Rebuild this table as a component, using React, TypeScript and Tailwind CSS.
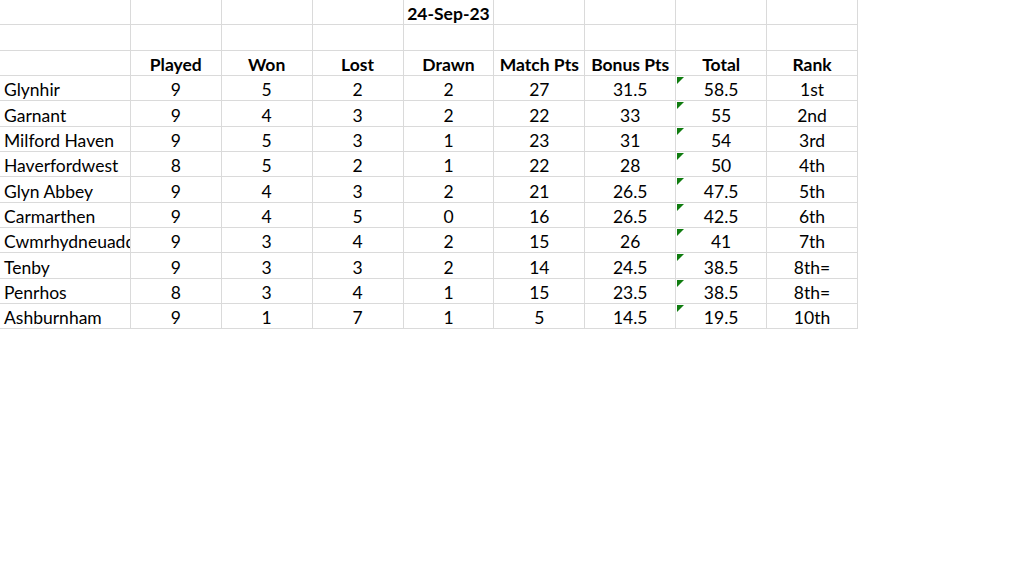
const ROW_H = [25, 26, 25, 25, 26, 25, 25, 26, 25, 25, 26, 25, 25];

const HEADERS = ["Played", "Won", "Lost", "Drawn", "Match Pts", "Bonus Pts", "Total", "Rank"];

const ROWS: [string, string, string, string, string, string, string, string, string][] = [
  ["Glynhir", "9", "5", "2", "2", "27", "31.5", "58.5", "1st"],
  ["Garnant", "9", "4", "3", "2", "22", "33", "55", "2nd"],
  ["Milford Haven", "9", "5", "3", "1", "23", "31", "54", "3rd"],
  ["Haverfordwest", "8", "5", "2", "1", "22", "28", "50", "4th"],
  ["Glyn Abbey", "9", "4", "3", "2", "21", "26.5", "47.5", "5th"],
  ["Carmarthen", "9", "4", "5", "0", "16", "26.5", "42.5", "6th"],
  ["Cwmrhydneuadd", "9", "3", "4", "2", "15", "26", "41", "7th"],
  ["Tenby", "9", "3", "3", "2", "14", "24.5", "38.5", "8th="],
  ["Penrhos", "8", "3", "4", "1", "15", "23.5", "38.5", "8th="],
  ["Ashburnham", "9", "1", "7", "1", "5", "14.5", "19.5", "10th"],
];

function Cell({ children, first, bold, flag, h }: { children?: React.ReactNode; first?: boolean; bold?: boolean; flag?: boolean; h: number }) {
  return (
    <div
      className={`relative flex items-center pt-[4px] overflow-hidden whitespace-nowrap border-r border-b border-[#dadada] ${first ? "w-[131px] justify-start pl-[4px]" : "w-[91px] justify-center"} ${bold ? "font-bold" : ""}`}
      style={{ height: h }}
    >
      {flag && <span className="absolute left-[1px] top-[1px] w-0 h-0 border-t-[7px] border-r-[7px] border-t-[#107c10] border-r-transparent" />}
      {children}
    </div>
  );
}

export default function App() {
  const blanks = ["", "", "", "", "", "", "", ""];
  return (
    <div className="w-[1024px] h-[576px] bg-white text-black text-[17.5px] leading-none" style={{ fontFamily: "Lato, 'Open Sans', sans-serif" }}>
      <div className="flex flex-col w-[858px]">
        <div className="flex">
          <Cell first h={ROW_H[0]} />
          {blanks.map((_, i) => (
            <Cell key={i} h={ROW_H[0]} bold>{i === 3 ? "24-Sep-23" : ""}</Cell>
          ))}
        </div>
        <div className="flex">
          <Cell first h={ROW_H[1]} />
          {blanks.map((_, i) => (
            <Cell key={i} h={ROW_H[1]} />
          ))}
        </div>
        <div className="flex">
          <Cell first h={ROW_H[2]} />
          {HEADERS.map((t) => (
            <Cell key={t} h={ROW_H[2]} bold>{t}</Cell>
          ))}
        </div>
        {ROWS.map((r, ri) => (
          <div key={r[0]} className="flex">
            {r.map((v, ci) => (
              <Cell key={ci} first={ci === 0} flag={ci === 7} h={ROW_H[ri + 3]}>
                {v}
              </Cell>
            ))}
          </div>
        ))}
      </div>
    </div>
  );
}
